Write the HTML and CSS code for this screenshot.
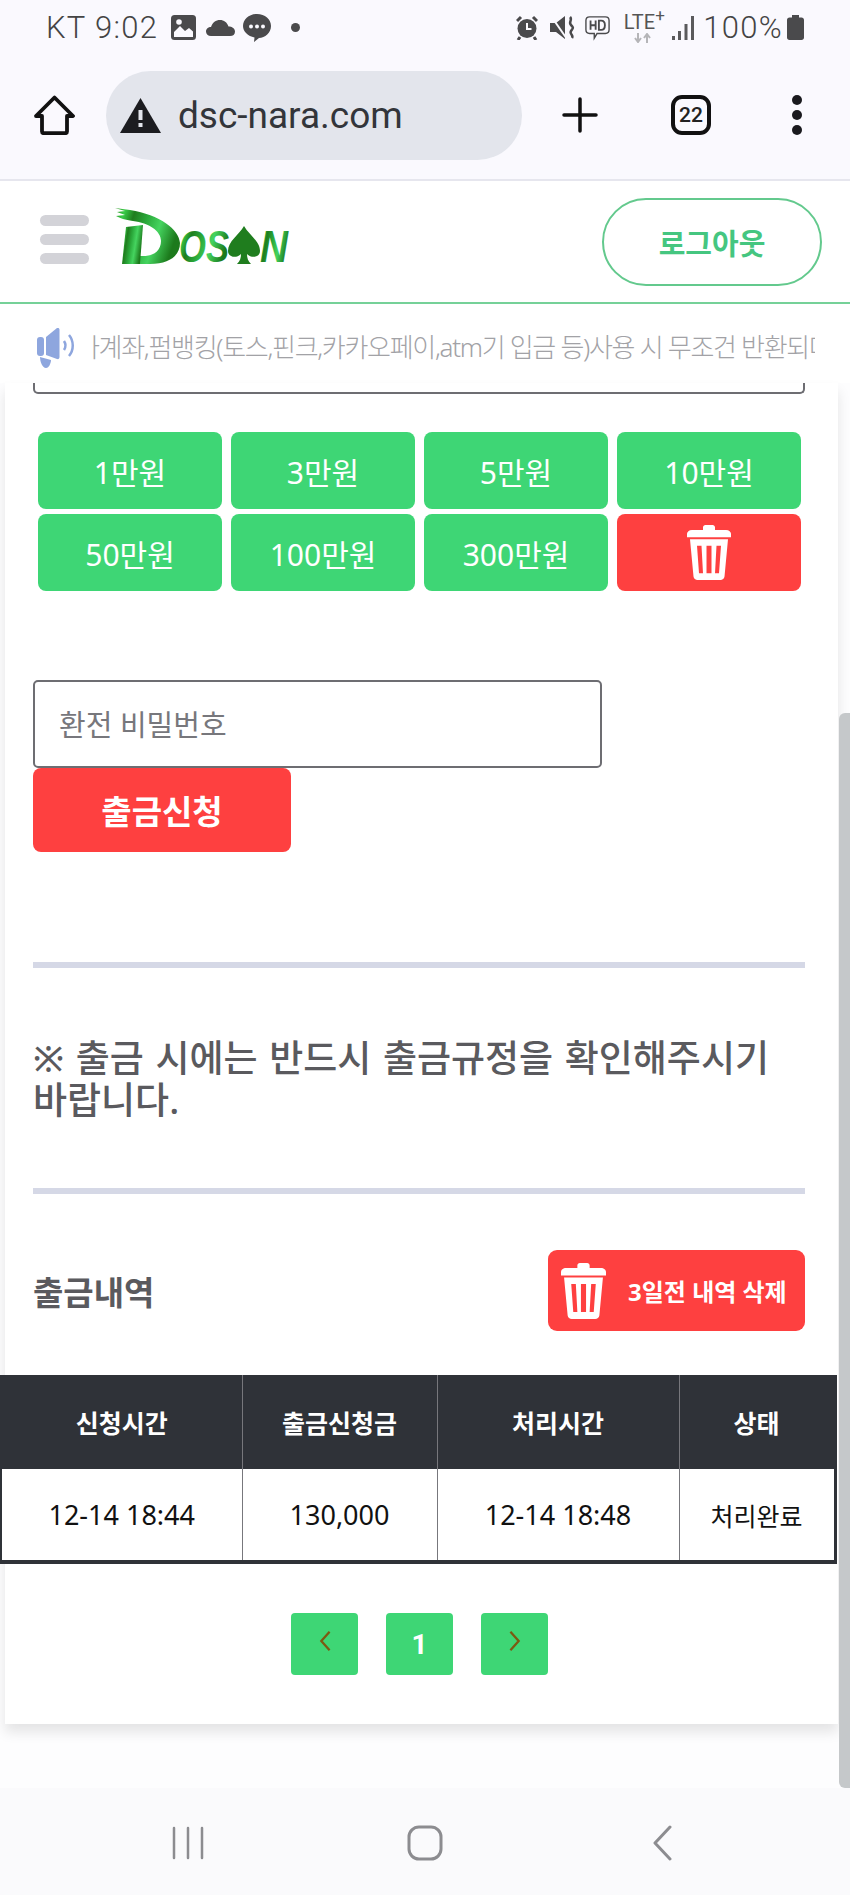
FILE: index.html
```html
<!DOCTYPE html>
<html lang="ko">
<head>
    <meta charset="UTF-8">
    <meta name="viewport" content="width=device-width, initial-scale=1.0">
    <title>출금신청</title>
    <link rel="stylesheet" href="styles.css">
</head>
<body>
    <svg class="defs" width="0" height="0">
        <defs>
            <symbol id="trash" viewBox="0 0 44 56" preserveAspectRatio="none">
                <path fill="#fff" d="M16 2.500c0-1.500 1-2.500 2.500-2.500h7c1.500 0 2.500 1 2.500 2.500V5h11c3 0 5 2 5 4v3.500H0V9c0-2 2-4 5-4h11z"/>
                <path fill="#fff" fill-rule="evenodd" d="M3 14.500h38l-3.500 38c-.3 2.200-2 3.500-4 3.500h-23c-2 0-3.700-1.300-4-3.500zM10 21l2 28h4l-1.500-28zM19.500 21v28h5V21zM29.500 21L28 49h4l2-28z"/>
            </symbol>
        </defs>
    </svg>

    <div class="status-bar">
        <div class="status-left">
            <span class="status-text">KT 9:02</span>
            <svg class="ico-img" viewBox="0 0 25 25"><rect width="25" height="25" rx="3.500" fill="#4a4a4c"/><path fill="#faf9fe" d="M3 22v-5l6-6 5 5 4-3 4 3.500V22z"/><circle cx="8" cy="7" r="2.800" fill="#faf9fe"/></svg>
            <svg class="ico-cloud" viewBox="0 0 29 16"><path fill="#4a4a4c" d="M5 16c-3 0-5-1.800-5-4.500S2.200 7 5 7C6.500 2.500 9.800 0 14 0c4 0 7 2.300 8.500 6.500 3.500 0 6.500 2 6.500 5S27 16 24 16z"/></svg>
            <svg class="ico-chat" viewBox="0 0 28 28"><path fill="#4a4a4c" d="M14 0c8 0 14 5.300 14 12s-6 12-12 12l-5 4 .5-4.500C5 22 0 17.800 0 12 0 5.300 6 0 14 0z"/><circle cx="8" cy="12.500" r="2" fill="#faf9fe"/><circle cx="14" cy="12.500" r="2" fill="#faf9fe"/><circle cx="20" cy="12.500" r="2" fill="#faf9fe"/></svg>
            <span class="ico-dot"></span>
        </div>
        <div class="status-right">
            <svg class="ico-alarm" viewBox="0 0 22 25"><circle cx="11" cy="13.500" r="9.500" fill="#4a4a4c"/><path d="M11 8v6h4.500" fill="none" stroke="#faf9fe" stroke-width="2"/><path d="M1 6l4-4M21 6l-4-4M4 22l-2 3M18 22l2 3" stroke="#4a4a4c" stroke-width="3"/></svg>
            <svg class="ico-mute" viewBox="0 0 25 25"><path fill="#4a4a4c" d="M0 8h6l9-7v23l-9-7H0z"/><path d="M1 1l16 23" stroke="#faf9fe" stroke-width="2"/><path d="M20 2c3 3-2 5 1 8s2 3 0 6 3 4 1 7" fill="none" stroke="#4a4a4c" stroke-width="2.500"/></svg>
            <svg class="ico-hd" viewBox="0 0 27 26"><path fill="none" stroke="#4a4a4c" stroke-width="1.500" d="M5 1h17c2.500 0 4 1.500 4 4v10c0 2.500-1.500 4-4 4h-9l-3 5v-5H5c-2.500 0-4-1.500-4-4V5c0-2.500 1.500-4 4-4z"/><path fill="none" stroke="#4a4a4c" stroke-width="2" d="M6 5v10M6 10h5.500M11.500 5v10M15 5v10h2.500c2.500 0 4-2 4-5s-1.500-5-4-5z"/></svg>
            <div class="lte">
                <span class="lte-text">LTE<sup>+</sup></span>
                <svg class="ico-arrows" viewBox="0 0 18 10"><path d="M4 0v8M1 5l3 4 3-4M13 10V2M10 5l3-4 3 4" fill="none" stroke="#b5b5b8" stroke-width="2"/></svg>
            </div>
            <svg class="ico-signal" viewBox="0 0 22 24"><path fill="#5a5a5c" d="M0 20h3v4H0zM6 15h3v9H6zM12.500 8h3v16h-3zM19 0h3v24h-3z"/></svg>
            <span class="status-text pct">100%</span>
            <svg class="ico-batt" viewBox="0 0 17 25"><path fill="#4a4a4c" d="M5 0h7v2.500h2.500c1.500 0 2.500 1 2.500 2.500v17.500c0 1.500-1 2.500-2.500 2.500h-12C1 25 0 24 0 22.500V5c0-1.500 1-2.500 2.500-2.500H5z"/></svg>
        </div>
    </div>

    <div class="browser-bar">
        <svg class="ico-home" viewBox="0 0 41 40"><path fill="none" stroke="#111" stroke-width="3.800" stroke-linejoin="round" d="M20.500 2.500L39 21h-6v15.500c0 1-.6 1.700-1.700 1.700H9.700c-1 0-1.700-.7-1.700-1.700V21H2z"/></svg>
        <div class="url-pill">
            <svg class="ico-warn" viewBox="0 0 41 35"><path fill="#1c1c20" d="M20.500 0L41 35H0z"/><path fill="#e3e5ec" d="M18.500 12h4v10h-4zM18.500 25h4v4h-4z"/></svg>
            <span class="url-text">dsc-nara.com</span>
        </div>
        <svg class="ico-plus" viewBox="0 0 36 36"><path stroke="#111" stroke-width="3.500" stroke-linecap="round" d="M18 2v32M2 18h32"/></svg>
        <div class="tab-count">22</div>
        <div class="more-dots"><span></span><span></span><span></span></div>
    </div>

    <header class="site-header">
        <div class="burger"><span></span><span></span><span></span></div>
        <svg class="logo" viewBox="0 0 174 58">
            <defs>
                <linearGradient id="logoGreen" x1="0" y1="0" x2="1" y2="0.300">
                    <stop offset="0" stop-color="#2f8f22"/>
                    <stop offset="0.150" stop-color="#38cc48"/>
                    <stop offset="0.300" stop-color="#1f7d1e"/>
                    <stop offset="0.500" stop-color="#2aa83a"/>
                    <stop offset="0.720" stop-color="#45d45f"/>
                    <stop offset="1" stop-color="#1c7a1c"/>
                </linearGradient>
            </defs>
            <path fill="url(#logoGreen)" d="M0 1l15 2C45 8 64 22 65 36c0 12-10 21-30 21H20l5-8c13 1 21-5 21-15 0-10-12-18-28-20C10 13 5 11 1 9l9-1-8-3 8-1z"/>
            <path fill="url(#logoGreen)" d="M11 20l17-2-3 39H7z"/>
            <text class="logo-text" x="64" y="55" textLength="50" lengthAdjust="spacingAndGlyphs" fill="url(#logoGreen)">OS</text>
            <path fill="#1f7d1e" d="M129 19c5 9 16 15 16 25 0 6-8 8-13 3 0 4 1 7 4 10h-14c3-3 4-6 4-10-5 5-13 3-13-3 0-10 11-16 16-25z"/>
            <text class="logo-text" x="145" y="55" textLength="28" lengthAdjust="spacingAndGlyphs" fill="url(#logoGreen)">N</text>
        </svg>
        <button class="logout-btn">로그아웃</button>
    </header>

    <div class="ticker">
        <svg class="ico-speaker" viewBox="0 0 42 40"><g fill="#8ea6de"><rect x="0" y="9" width="7" height="19" rx="3"/><path d="M9 9l11-9c1.500-.5 2.500 .5 2.500 2v27c0 1.500-1 2.500-2.500 2L9 27z"/><path d="M3 29l11 3c0 3-2 8-5 8-4 0-6-7-6-11z"/></g><path fill="none" stroke="#8ea6de" stroke-width="2.500" d="M27 13c2 3 2 6 0 9M32 7c5 6 5 15 0 21"/></svg>
        <div class="ticker-clip">
            <span class="ticker-text">타계좌,펌뱅킹(토스,핀크,카카오페이,atm기 입금 등)사용 시 무조건 반환되며</span>
        </div>
    </div>

    <main class="card">
        <div class="amount-stub"></div>
        <div class="amount-grid">
            <button class="amount-btn">1만원</button>
            <button class="amount-btn">3만원</button>
            <button class="amount-btn">5만원</button>
            <button class="amount-btn">10만원</button>
            <button class="amount-btn">50만원</button>
            <button class="amount-btn">100만원</button>
            <button class="amount-btn">300만원</button>
            <button class="amount-btn amount-clear"><svg class="ico-trash-sm"><use href="#trash"/></svg></button>
        </div>

        <input class="pw-input" type="password" placeholder="환전 비밀번호">
        <button class="submit-btn">출금신청</button>

        <hr class="divider first">
        <p class="notice">※ 출금 시에는 반드시 출금규정을 확인해주시기 바랍니다.</p>
        <hr class="divider second">

        <div class="history-head">
            <h2 class="history-title">출금내역</h2>
            <button class="purge-btn"><svg class="ico-trash-lg"><use href="#trash"/></svg>3일전 내역 삭제</button>
        </div>

        <table class="history">
            <colgroup>
                <col class="col-a"><col class="col-b"><col class="col-c"><col class="col-d">
            </colgroup>
            <thead>
                <tr><th>신청시간</th><th>출금신청금</th><th>처리시간</th><th>상태</th></tr>
            </thead>
            <tbody>
                <tr><td>12-14 18:44</td><td>130,000</td><td>12-14 18:48</td><td>처리완료</td></tr>
            </tbody>
        </table>

        <div class="pager">
            <a class="page-btn"><svg class="ico-chev" viewBox="0 0 14 24"><path d="M12 2L3 12l9 10" fill="none" stroke="#7b5a12" stroke-width="2.500"/></svg></a>
            <a class="page-btn current">1</a>
            <a class="page-btn"><svg class="ico-chev" viewBox="0 0 14 24"><path d="M2 2l9 10-9 10" fill="none" stroke="#7b5a12" stroke-width="2.500"/></svg></a>
        </div>
    </main>

    <div class="scroll-thumb"></div>

    <nav class="nav-bar">
        <svg class="ico-recents" viewBox="0 0 32 34"><path stroke="#8c8c90" stroke-width="2.500" stroke-linecap="round" d="M2 2v30M16 2v30M30 2v30"/></svg>
        <svg class="ico-square" viewBox="0 0 36 36"><rect x="2" y="2" width="32" height="32" rx="10" fill="none" stroke="#8c8c90" stroke-width="3"/></svg>
        <svg class="ico-back" viewBox="0 0 20 36"><path d="M18 2L3 18l15 16" fill="none" stroke="#8c8c90" stroke-width="3" stroke-linecap="round" stroke-linejoin="round"/></svg>
    </nav>
</body>
</html>
```

FILE: styles.css
```css
html, body {
    height: 100%;
}

body {
    margin: 0;
    height: 1895px;
    overflow: hidden;
    position: relative;
    display: flex;
    flex-direction: column;
    background-color: #fdfdfe;
    font-family: "Noto Sans", "Noto Sans CJK KR", sans-serif;
}

button, input {
    font-family: inherit;
}

.defs {
    position: absolute;
}

/* phone status bar */
.status-bar {
    height: 51px;
    padding: 4px 46px 0 46px;
    box-sizing: border-box;
    flex: none;
    display: flex;
    justify-content: space-between;
    align-items: center;
    background-color: #faf9fe;
}

.status-left, .status-right {
    display: flex;
    align-items: center;
}

.status-text {
    font-family: Roboto, sans-serif;
    font-size: 31px;
    font-weight: 300;
    letter-spacing: 1.3px;
    color: #444;
}

.ico-img { width: 25px; height: 25px; margin-left: 13px; }
.ico-cloud { width: 29px; height: 16px; margin-left: 10px; }
.ico-chat { width: 28px; height: 28px; margin-left: 8px; }
.ico-dot { width: 9px; height: 9px; margin-left: 20px; border-radius: 50%; background-color: #4a4a4c; }
.ico-alarm { width: 22px; height: 25px; }
.ico-mute { width: 25px; height: 25px; margin-left: 12px; }
.ico-hd { width: 25px; height: 26px; margin-left: 10px; }
.lte { width: 42px; margin-left: 13px; display: flex; flex-direction: column; align-items: center; }
.lte-text { font-family: Roboto, sans-serif; font-size: 20px; line-height: 21px; color: #555; }
.lte-text sup { font-size: 17px; line-height: 0; }
.ico-arrows { width: 18px; height: 10px; margin-right: 2px; }
.ico-signal { width: 22px; height: 24px; margin-left: 7px; }
.pct { margin-left: 9px; }
.ico-batt { width: 17px; height: 25px; margin-left: 4px; }

/* browser toolbar */
.browser-bar {
    height: 130px;
    flex: none;
    box-sizing: border-box;
    display: flex;
    align-items: center;
    background-color: #faf9fe;
    border-bottom: 2px solid #e6e6ee;
}

.ico-home { width: 41px; height: 40px; margin-left: 34px; }

.url-pill {
    width: 416px;
    height: 89px;
    margin-left: 31px;
    display: flex;
    align-items: center;
    border-radius: 45px;
    background-color: #e3e5ec;
}

.ico-warn { width: 41px; height: 35px; margin-left: 14px; }

.url-text {
    margin-left: 17px;
    font-family: Roboto, sans-serif;
    font-size: 37px;
    color: #33353a;
}

.ico-plus { width: 36px; height: 36px; margin-left: 40px; }

.tab-count {
    width: 40px;
    height: 40px;
    margin-left: 73px;
    box-sizing: border-box;
    border: 4px solid #111;
    border-radius: 11px;
    font-family: Roboto, sans-serif;
    font-size: 21px;
    font-weight: 500;
    line-height: 32px;
    text-align: center;
    color: #222;
}

.more-dots {
    margin-left: 81px;
    display: flex;
    flex-direction: column;
    gap: 5px;
}

.more-dots span {
    width: 10px;
    height: 10px;
    border-radius: 50%;
    background-color: #1a1a1e;
}

/* site header */
.site-header {
    height: 123px;
    flex: none;
    box-sizing: border-box;
    padding: 0 28px 0 40px;
    display: flex;
    align-items: center;
    background-color: #fff;
    border-bottom: 2px solid #75d198;
}

.burger {
    width: 49px;
    margin-bottom: 5px;
    display: flex;
    flex-direction: column;
    gap: 8px;
}

.burger span {
    height: 11px;
    border-radius: 6px;
    background-color: #d3d3d8;
}

.logo {
    width: 174px;
    height: 58px;
    margin-left: 26px;
    margin-bottom: 12px;
    overflow: visible;
}

.logo-text {
    font-family: "Liberation Sans", sans-serif;
    font-size: 44px;
    font-weight: bold;
    font-style: italic;
}

.logout-btn {
    width: 220px;
    height: 88px;
    margin-left: auto;
    border: 2px solid #63c98d;
    border-radius: 44px;
    background-color: #fff;
    font-size: 29px;
    font-weight: 700;
    color: #45c680;
}

/* notice ticker */
.ticker {
    height: 79px;
    flex: none;
    padding: 0 35px 0 37px;
    display: flex;
    align-items: center;
    background-color: #fff;
}

.ico-speaker { width: 42px; height: 40px; flex: none; margin-top: 8px; }

.ticker-clip {
    margin-left: 13px;
    margin-top: 4px;
    flex: 1;
    overflow: hidden;
    white-space: nowrap;
}

.ticker-text {
    display: block;
    margin-left: -16px;
    font-size: 26px;
    font-weight: 300;
    letter-spacing: -1.3px;
    color: #a2a2a6;
}

/* main card */
.card {
    flex: none;
    height: 1341px;
    margin: 0 12px 0 5px;
    padding: 0 33px 0 28px;
    box-sizing: border-box;
    background-color: #fff;
    box-shadow: 0 8px 12px rgba(0, 0, 0, 0.1);
}

.amount-stub {
    height: 11px;
    box-sizing: border-box;
    border: 2px solid #6d6d72;
    border-top: 0;
    border-radius: 0 0 5px 5px;
}

.amount-grid {
    margin: 38px 4px 0 5px;
    display: grid;
    grid-template-columns: repeat(4, 184px);
    grid-auto-rows: 77px;
    column-gap: 9px;
    row-gap: 5px;
}

.amount-btn {
    padding: 0;
    border: 0;
    border-radius: 8px;
    background-color: #3ed675;
    font-size: 30px;
    color: #fff;
}

.amount-clear {
    background-color: #fe4040;
    display: flex;
    align-items: center;
    justify-content: center;
}

.ico-trash-sm { width: 44px; height: 55px; }
.ico-trash-lg { width: 45px; height: 56px; margin-right: 22px; flex: none; }

.pw-input {
    display: block;
    width: 569px;
    height: 88px;
    margin-top: 89px;
    padding: 0 0 0 24px;
    box-sizing: border-box;
    border: 2px solid #6d6d72;
    border-radius: 5px;
    font-size: 29px;
    background-color: #fff;
}

.pw-input::placeholder {
    color: #77777c;
    opacity: 1;
}

.submit-btn {
    display: block;
    width: 258px;
    height: 84px;
    padding: 0;
    border: 0;
    border-radius: 8px;
    background-color: #fe4040;
    font-size: 33px;
    font-weight: 700;
    color: #fff;
}

.divider {
    margin: 0;
    height: 6px;
    border: 0;
    background-color: #d5d8e6;
}

.divider.first { margin-top: 110px; }
.divider.second { margin-top: 67px; }

.notice {
    margin: 69px 0 0;
    font-size: 37px;
    font-weight: 500;
    line-height: 42px;
    word-spacing: 2px;
    color: #5a5a5e;
}

.history-head {
    margin-top: 56px;
    display: flex;
    justify-content: space-between;
    align-items: center;
}

.history-title {
    margin: 0;
    font-size: 33px;
    font-weight: 700;
    color: #5a5a5e;
}

.purge-btn {
    width: 257px;
    height: 81px;
    padding: 0 0 0 13px;
    border: 0;
    border-radius: 9px;
    display: flex;
    align-items: center;
    background-color: #fe4040;
    font-size: 24px;
    font-weight: 700;
    color: #fff;
    white-space: nowrap;
}

.history {
    width: 834px;
    margin: 44px 0 0 -33px;
    table-layout: fixed;
    border-collapse: collapse;
    border: 3px solid #2f3238;
    border-width: 0 3px 4px 2px;
}

.col-a { width: 241px; }
.col-b { width: 195px; }
.col-c { width: 242px; }
.col-d { width: 156px; }

.history th {
    height: 94px;
    padding: 0;
    background-color: #2f3238;
    border-right: 1px solid #77777c;
    font-size: 25px;
    font-weight: 700;
    color: #fff;
}

.history td {
    height: 91px;
    padding: 0;
    border-right: 1px solid #77777c;
    background-color: #fff;
    font-size: 27px;
    text-align: center;
    color: #111;
}

.history th:last-child, .history td:last-child {
    border-right: 0;
}

.history td:last-child {
    font-size: 25px;
}

.pager {
    margin-top: 49px;
    margin-left: 258px;
    display: flex;
    gap: 28px;
}

.page-btn {
    width: 67px;
    height: 62px;
    display: flex;
    align-items: center;
    justify-content: center;
    border-radius: 4px;
    background-color: #3ed675;
    font-family: Roboto, sans-serif;
    font-size: 28px;
    font-weight: 700;
    color: #fff;
}

.ico-chev { width: 14px; height: 22px; margin-bottom: 6px; }

/* overlay scrollbar */
.scroll-thumb {
    position: absolute;
    left: 839px;
    top: 713px;
    width: 11px;
    height: 1075px;
    border-radius: 6px 0 0 6px;
    background-color: #c5c8ca;
}

/* android nav */
.nav-bar {
    position: absolute;
    left: 0;
    right: 0;
    bottom: 0;
    height: 107px;
    display: flex;
    align-items: center;
    background-color: #fafafc;
}

.ico-recents { width: 32px; height: 34px; margin-left: 172px; margin-top: 2px; }
.ico-square { width: 36px; height: 36px; margin-left: 203px; margin-top: 2px; }
.ico-back { width: 20px; height: 36px; margin-left: 209px; margin-top: 2px; }
```
